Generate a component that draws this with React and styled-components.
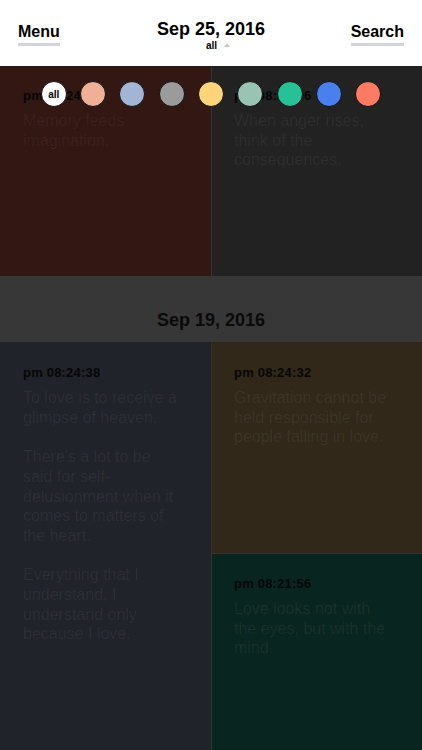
import React from "react";
import styled, { createGlobalStyle } from "styled-components";

const GlobalStyle = createGlobalStyle`
  html, body {
    margin: 0;
    padding: 0;
    background: #202329;
  }
  body {
    font-family: "Liberation Sans", Arial, sans-serif;
    -webkit-font-smoothing: antialiased;
  }
`;

const Screen = styled.div`
  position: relative;
  width: 422px;
  height: 750px;
  overflow: hidden;
  background: #202329;
`;

const Header = styled.header`
  height: 66px;
  background: #ffffff;
  display: grid;
  grid-template-columns: 1fr auto 1fr;
  align-items: start;
  padding: 0 18px 0 18px;
  box-sizing: border-box;
`;

const NavButton = styled.button`
  justify-self: ${p => (p.$end ? "end" : "start")};
  margin-top: 22px;
  padding: 0 0 2px 0;
  border: none;
  background: none;
  font-family: inherit;
  font-size: 16px;
  font-weight: bold;
  line-height: 19px;
  color: #000;
  border-bottom: 3px solid #d2d3dc;
`;

const TitleBlock = styled.div`
  display: flex;
  flex-direction: column;
  align-items: center;
  padding-top: 18px;
`;

const Title = styled.h1`
  margin: 0;
  font-size: 18px;
  line-height: 22px;
  font-weight: bold;
  color: #000;
`;

const Filter = styled.div`
  display: flex;
  align-items: center;
  gap: 7px;
  margin-left: 14px;
  font-size: 10px;
  line-height: 12px;
  font-weight: bold;
  color: #000;
`;

const Caret = styled.span`
  width: 0;
  height: 0;
  border-left: 3px solid transparent;
  border-right: 3px solid transparent;
  border-bottom: 4px solid #c8c8cc;
  margin-top: -2px;
`;

const Section = styled.section`
  display: grid;
  grid-template-columns: 211px 210px;
  column-gap: 1px;
  background: #343434;
`;

const Column = styled.div`
  display: flex;
  flex-direction: column;
  gap: 1px;
`;

const Card = styled.article`
  background: ${p => p.$bg};
  min-height: ${p => p.$h}px;
  padding: ${p => p.$top}px 0 0 ${p => p.$left}px;
  box-sizing: border-box;
  flex: ${p => (p.$grow ? 1 : "none")};
`;

const Time = styled.div`
  font-size: 13px;
  line-height: 16px;
  font-weight: bold;
  letter-spacing: 0.2px;
  color: #060606;
`;

const Body = styled.div`
  margin-top: 7px;
  width: 160px;
  font-size: 16px;
  line-height: 19.7px;
  color: ${p => p.$tone || "rgba(255, 255, 255, 0.065)"};

  p {
    margin: 0 0 19.7px 0;
  }
`;

const DateBar = styled.div`
  height: 66px;
  background: #373737;
  box-sizing: border-box;
  padding-top: 33px;
  text-align: center;
  font-size: 18px;
  line-height: 22px;
  font-weight: bold;
  color: #0a0a0a;
`;

const Swatches = styled.div`
  position: absolute;
  top: 81px;
  left: 0;
  right: 0;
  display: flex;
  justify-content: center;
  gap: 13.3px;
`;

const Swatch = styled.div`
  width: 26px;
  height: 26px;
  border-radius: 50%;
  box-sizing: border-box;
  border: 1.2px solid #111;
  background: ${p => p.$color};
  display: flex;
  align-items: center;
  justify-content: center;
  font-size: 10px;
  font-weight: bold;
  color: #000;
`;

const colors = [
  "#ffffff",
  "#f0b097",
  "#a3b4d4",
  "#9b9b9b",
  "#fcd47a",
  "#99c3b3",
  "#26c197",
  "#4a80ee",
  "#fd7b62",
];

export default function App() {
  return (
    <Screen>
      <GlobalStyle />
      <Header>
        <NavButton>Menu</NavButton>
        <TitleBlock>
          <Title>Sep 25, 2016</Title>
          <Filter>
            all <Caret />
          </Filter>
        </TitleBlock>
        <NavButton $end>Search</NavButton>
      </Header>

      <Section>
        <Column>
          <Card $bg="#321713" $h={210} $top={22} $left={23}>
            <Time>pm 08:24:51</Time>
            <Body $tone="rgba(255, 255, 255, 0.06)">
              <p>Memory feeds imagination.</p>
            </Body>
          </Card>
        </Column>
        <Column>
          <Card $bg="#222222" $h={210} $top={22} $left={22}>
            <Time>pm 08:25:06</Time>
            <Body>
              <p>When anger rises, think of the consequences.</p>
            </Body>
          </Card>
        </Column>
      </Section>

      <DateBar>Sep 19, 2016</DateBar>

      <Section>
        <Column>
          <Card $bg="#202329" $h={408} $top={23} $left={23} $grow>
            <Time>pm 08:24:38</Time>
            <Body>
              <p>To love is to receive a glimpse of heaven.</p>
              <p>There's a lot to be said for self-delusionment when it comes to matters of the heart.</p>
              <p>Everything that I understand, I understand only because I love.</p>
            </Body>
          </Card>
        </Column>
        <Column>
          <Card $bg="#312819" $h={211} $top={23} $left={22}>
            <Time>pm 08:24:32</Time>
            <Body>
              <p>Gravitation cannot be held responsible for people falling in love.</p>
            </Body>
          </Card>
          <Card $bg="#092520" $h={196} $top={22} $left={22} $grow>
            <Time>pm 08:21:56</Time>
            <Body>
              <p>Love looks not with the eyes, but with the mind.</p>
            </Body>
          </Card>
        </Column>
      </Section>

      <Swatches>
        {colors.map((c, i) => (
          <Swatch key={c} $color={c}>
            {i === 0 ? "all" : null}
          </Swatch>
        ))}
      </Swatches>
    </Screen>
  );
}
